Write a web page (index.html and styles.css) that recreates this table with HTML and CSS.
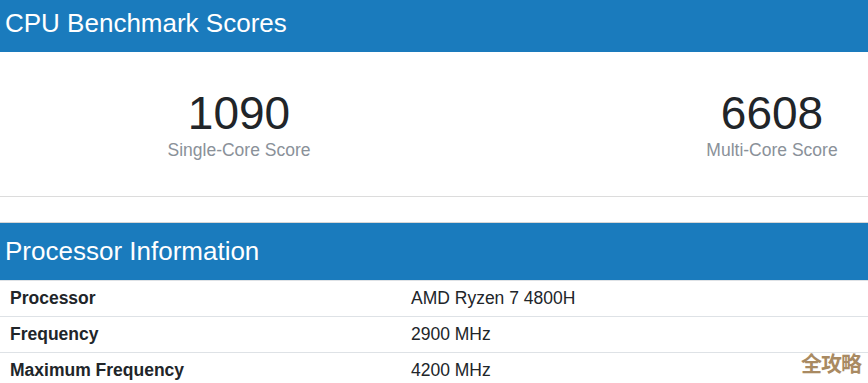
FILE: index.html
```html
<!DOCTYPE html>
<html lang="en">
<head>
<meta charset="utf-8">
<title>CPU Benchmark Scores</title>
<link rel="stylesheet" href="styles.css">
</head>
<body>
  <section class="card scores-card">
    <h2 class="card-title first">CPU Benchmark Scores</h2>
    <div class="scores">
      <div class="score">
        <div class="score-value">1090</div>
        <div class="score-label">Single-Core Score</div>
      </div>
      <div class="score">
        <div class="score-value">6608</div>
        <div class="score-label">Multi-Core Score</div>
      </div>
    </div>
  </section>

  <section class="card info-card">
    <h2 class="card-title second">Processor Information</h2>
    <table class="info">
      <tbody>
        <tr><td class="name">Processor</td><td class="value">AMD Ryzen 7 4800H</td></tr>
        <tr><td class="name">Frequency</td><td class="value">2900 MHz</td></tr>
        <tr><td class="name">Maximum Frequency</td><td class="value">4200 MHz</td></tr>
      </tbody>
    </table>
  </section>

  <div class="watermark">全攻略</div>
</body>
</html>
```
FILE: styles.css
```css
html, body {
  margin: 0;
  padding: 0;
  background: #ffffff;
  overflow: hidden;
}

body {
  width: 868px;
  height: 383px;
  position: relative;
  font-family: "Liberation Sans", Arial, "Noto Sans CJK SC", sans-serif;
  color: #212529;
}

.card {
  background: #ffffff;
}

.scores-card {
  border-bottom: 1px solid #dcdcdc;
}

.info-card {
  margin-top: 25px;
  border-top: 1px solid #d6d6d6;
}

.card-title {
  margin: 0;
  background: #1a7bbd;
  color: #ffffff;
  font-weight: normal;
  font-size: 26px;
  padding-left: 5px;
}

.card-title.first {
  line-height: 46px;
  padding-bottom: 6px;
}

.card-title.second {
  line-height: 57px;
}

.scores {
  display: flex;
  justify-content: space-between;
  padding: 34px 16px 35px 159px;
}

.score {
  width: 160px;
  text-align: center;
}

.score-value {
  font-size: 46px;
  line-height: 54px;
  color: #212529;
}

.score-label {
  font-size: 17.5px;
  line-height: 21px;
  color: #8a9199;
}

.info {
  width: 100%;
  border-collapse: collapse;
  font-size: 17.5px;
}

.info td {
  border-top: 1px solid #dee2e6;
  height: 35px;
  line-height: 35px;
  padding: 0;
  vertical-align: top;
}

.info .name {
  width: 400px;
  padding-left: 10px;
  font-weight: bold;
}

.info .value {
  padding-left: 1px;
}

.watermark {
  position: absolute;
  left: 801px;
  top: 352px;
  font-size: 21px;
  line-height: 1;
  font-weight: bold;
  color: #a98a62;
  font-family: "Noto Sans CJK SC", sans-serif;
  letter-spacing: -1px;
}
```
